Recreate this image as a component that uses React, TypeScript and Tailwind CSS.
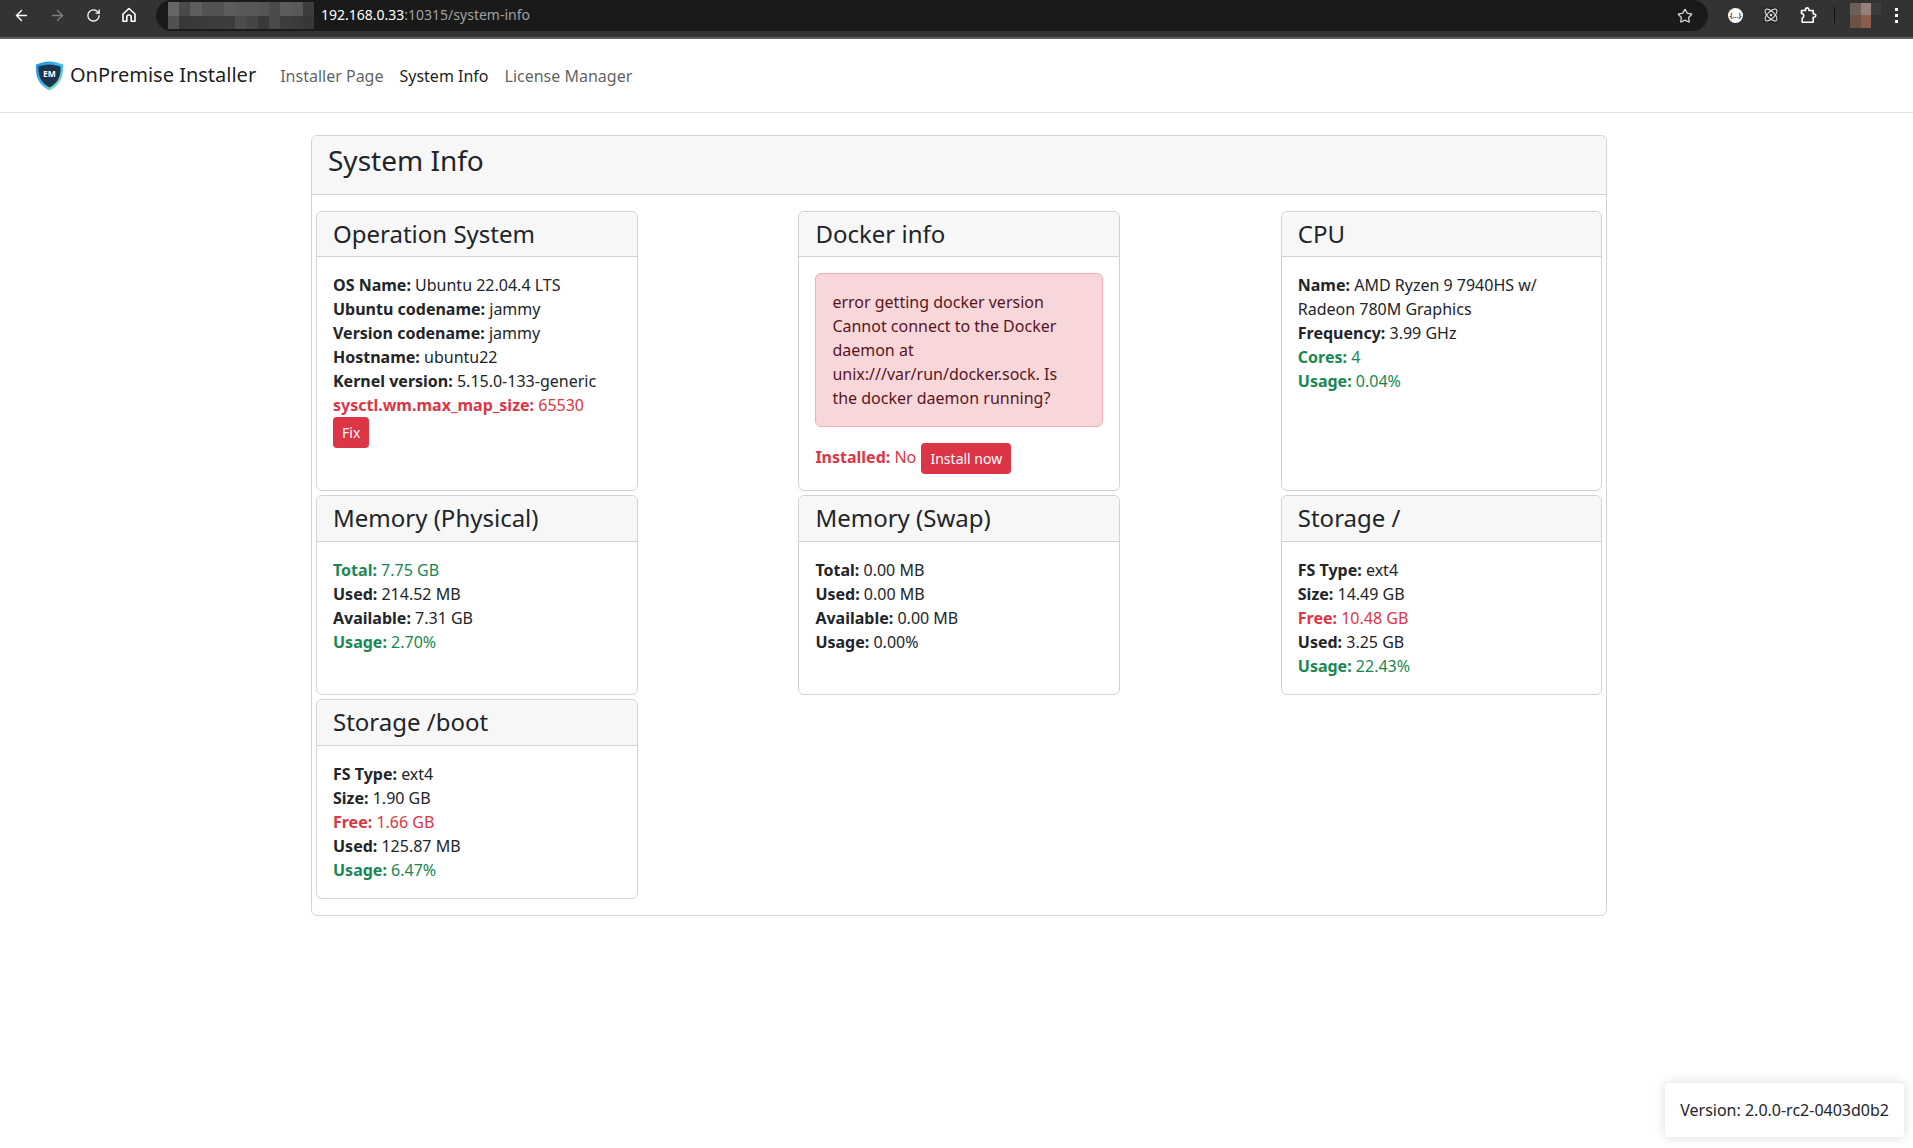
import React from "react";
import { ArrowLeft, ArrowRight, RotateCw, Star, Atom } from "lucide-react";

const blurTop = ["#666666", "#4a4a4a", "#5e5e5e", "#525252", "#525252", "#5c5c5c", "#585858", "#585858", "#555555", "#4b4b4b", "#5c5c5c", "#585858", "#3d3d3d"];
const blurBottom = ["#515151", "#383838", "#3a3a3a", "#3b3b3b", "#3c3c3c", "#3d3d3d", "#4c4c4c", "#454545", "#3a3a3a", "#4a4a4a", "#3d3d3d", "#3b3b3b", "#373737"];

function Row({ k, v, tone }: { k: string; v: string; tone?: "danger" | "success" }) {
  const color = tone === "danger" ? "text-[#dc3545]" : tone === "success" ? "text-[#198754]" : "";
  return (
    <div className={color}>
      <b className="font-bold">{k}:</b> {v}
    </div>
  );
}

function Card({ title, children }: { title: string; children: React.ReactNode }) {
  return (
    <div className="flex flex-col rounded-md border border-[#d3d3d3] bg-white">
      <div className="rounded-t-md border-b border-[#d3d3d3] bg-[#f7f7f7] px-4 py-2 text-2xl leading-[28.8px]">{title}</div>
      <div className="flex-1 p-4">{children}</div>
    </div>
  );
}

function Logo() {
  return (
    <svg width="29" height="30" viewBox="0 0 29 30">
      <defs>
        <linearGradient id="shieldRim" x1="0" y1="0" x2="1" y2="1">
          <stop offset="0" stopColor="#1f8fd8" />
          <stop offset="0.55" stopColor="#3cc0ec" />
          <stop offset="1" stopColor="#cdec72" />
        </linearGradient>
      </defs>
      <path d="M14.5 0.5C19 0.5 24 2 28 3.5C28.5 13 27.5 23 14.5 29.5C1.5 23 0.5 13 1 3.5C5 2 10 0.5 14.5 0.5Z" fill="url(#shieldRim)" />
      <path d="M14.5 3.5C18 3.5 22 4.5 25.5 5.5C26 14 24 21.5 14.5 26.5C5 21.5 3 14 3.5 5.5C7 4.5 11 3.5 14.5 3.5Z" fill="#1b3350" />
      <text x="14.5" y="15.5" textAnchor="middle" fontSize="8.5" fontWeight="700" fill="#ffffff" fontFamily="'Noto Sans', sans-serif">EM</text>
    </svg>
  );
}

function HomeIcon() {
  return (
    <svg width="16" height="16" viewBox="0 0 16 16" fill="none" stroke="currentColor" strokeWidth="1.6" strokeLinejoin="round">
      <path d="M2 7L8 1.5L14 7V14.2H10.2V10.2A2.2 2.2 0 0 0 5.8 10.2V14.2H2Z" />
    </svg>
  );
}

function PuzzleIcon() {
  return (
    <svg width="17" height="17" viewBox="0 0 17 17" fill="none" stroke="currentColor" strokeWidth="1.6" strokeLinejoin="round">
      <path d="M1.5 3.5H5.5V2.6A1.7 1.7 0 0 1 8.9 2.6V3.5H13.2V7H14.2A1.6 1.6 0 0 1 14.2 10.2H13.2V15.2H2.2V11.2A2.6 2.6 0 0 0 2.6 6.6L1.5 6.4Z" />
    </svg>
  );
}

function ToolbarButton({ children }: { children: React.ReactNode }) {
  return <div className="flex h-[30px] w-9 items-center justify-center">{children}</div>;
}

export default function App() {
  return (
    <div className="relative h-[1148px] overflow-hidden bg-white font-['Noto_Sans',sans-serif] text-base leading-6 text-[#212529]">
      <div className="flex h-[39px] items-start border-b-2 border-[#5f5f5f] bg-[#333333]">
        <div className="flex items-center pl-[3px] text-white">
          <ToolbarButton><ArrowLeft size={17} strokeWidth={2} /></ToolbarButton>
          <ToolbarButton><ArrowRight size={17} strokeWidth={2} className="text-[#7d7d7d]" /></ToolbarButton>
          <ToolbarButton><RotateCw size={15} strokeWidth={2} /></ToolbarButton>
          <ToolbarButton><HomeIcon /></ToolbarButton>
        </div>
        <div className="ml-[9px] flex h-[31px] w-[1552px] items-center rounded-full bg-[#1a1a1a] pr-[15px]">
          <div className="ml-[12px] grid h-[27px] w-[146px] grid-cols-[repeat(13,1fr)]">
            {blurTop.map((c, i) => (
              <div key={i} style={{ background: c }} />
            ))}
            {blurBottom.map((c, i) => (
              <div key={i} style={{ background: c }} />
            ))}
          </div>
          <div className="-mt-[2px] ml-[7px] text-[14px] leading-none text-white">
            192.168.0.33<span className="text-[#a0a0a0]">:10315/system-info</span>
          </div>
          <Star size={16} strokeWidth={2} className="ml-auto text-[#d0d0d0]" />
        </div>
        <div className="ml-[20px] flex h-[30px] items-center text-white">
          <div className="flex h-[15px] w-[15px] items-center justify-center rounded-full bg-white text-[7px] font-bold leading-none text-[#333333]">{"{…}"}</div>
          <div className="ml-[20px] flex h-[16px] w-[16px] items-center justify-center bg-[#2b2b2b]">
            <Atom size={16} strokeWidth={1.6} className="text-[#e6e6e6]" />
          </div>
          <div className="ml-[21px]"><PuzzleIcon /></div>
          <div className="ml-[17px] h-[16px] w-px bg-[#111111]" />
          <div className="ml-[15px] grid h-[25px] w-[31px] grid-cols-[11px_10px_10px] grid-rows-2">
            <div className="bg-[#6b5f57]" />
            <div className="bg-[#93817a]" />
            <div className="bg-[#3a3d3d]" />
            <div className="bg-[#6d5145]" />
            <div className="bg-[#8f5c4c]" />
            <div />
          </div>
          <div className="ml-[14px] flex flex-col gap-[3px]">
            <div className="h-[3px] w-[3px] bg-white" />
            <div className="h-[3px] w-[3px] bg-white" />
            <div className="h-[3px] w-[3px] bg-white" />
          </div>
        </div>
      </div>

      <nav className="flex h-[74px] items-center border-b border-[#dee2e6] bg-white pl-[35px]">
        <Logo />
        <span className="-mt-[2px] ml-[6px] mr-6 text-xl leading-[30px] text-black/90">OnPremise Installer</span>
        <div className="mt-[1px] flex gap-4">
          <span className="text-black/65">Installer Page</span>
          <span className="text-black/90">System Info</span>
          <span className="text-black/65">License Manager</span>
        </div>
      </nav>

      <div className="ml-[311px] mt-[22px] w-[1296px] rounded-md border border-[#d3d3d3] bg-white">
        <div className="rounded-t-md border-b border-[#d3d3d3] bg-[#f7f7f7] px-4 pb-4 pt-2 text-[28px] leading-[33.6px]">System Info</div>
        <div className="grid grid-cols-[322px_322px_321px] gap-x-[160.4px] gap-y-1 px-1 py-4">
          <Card title="Operation System">
            <Row k="OS Name" v="Ubuntu 22.04.4 LTS" />
            <Row k="Ubuntu codename" v="jammy" />
            <Row k="Version codename" v="jammy" />
            <Row k="Hostname" v="ubuntu22" />
            <Row k="Kernel version" v="5.15.0-133-generic" />
            <Row k="sysctl.wm.max_map_size" v="65530" tone="danger" />
            <button className="mb-[26px] block h-[31px] rounded bg-[#dc3545] px-[9px] text-sm leading-[21px] text-white">Fix</button>
          </Card>
          <Card title="Docker info">
            <div className="mb-4 rounded-md border border-[#f1aeb5] bg-[#f8d7da] p-4 pr-5 text-[#58151c]">
              error getting docker version
              <br />
              Cannot connect to the Docker daemon at unix:///var/run/docker.sock. Is the docker daemon running?
            </div>
            <div className="text-[#dc3545]">
              <b className="font-bold">Installed:</b> No{" "}
              <button className="ml-[1px] inline-block h-[31px] rounded bg-[#dc3545] px-[9px] align-middle text-sm leading-[21px] text-white">Install now</button>
            </div>
          </Card>
          <Card title="CPU">
            <div><b className="font-bold">Name:</b> AMD Ryzen 9 7940HS w/ Radeon 780M Graphics</div>
            <Row k="Frequency" v="3.99 GHz" />
            <Row k="Cores" v="4" tone="success" />
            <Row k="Usage" v="0.04%" tone="success" />
          </Card>
          <Card title="Memory (Physical)">
            <Row k="Total" v="7.75 GB" tone="success" />
            <Row k="Used" v="214.52 MB" />
            <Row k="Available" v="7.31 GB" />
            <Row k="Usage" v="2.70%" tone="success" />
          </Card>
          <Card title="Memory (Swap)">
            <Row k="Total" v="0.00 MB" />
            <Row k="Used" v="0.00 MB" />
            <Row k="Available" v="0.00 MB" />
            <Row k="Usage" v="0.00%" />
          </Card>
          <Card title="Storage /">
            <Row k="FS Type" v="ext4" />
            <Row k="Size" v="14.49 GB" />
            <Row k="Free" v="10.48 GB" tone="danger" />
            <Row k="Used" v="3.25 GB" />
            <Row k="Usage" v="22.43%" tone="success" />
          </Card>
          <Card title="Storage /boot">
            <Row k="FS Type" v="ext4" />
            <Row k="Size" v="1.90 GB" />
            <Row k="Free" v="1.66 GB" tone="danger" />
            <Row k="Used" v="125.87 MB" />
            <Row k="Usage" v="6.47%" tone="success" />
          </Card>
        </div>
      </div>

      <div className="absolute bottom-[11px] right-[9px] rounded-sm bg-white p-[15px] shadow-[0_0_12px_rgba(0,0,0,0.15)]">Version: 2.0.0-rc2-0403d0b2</div>
    </div>
  );
}
